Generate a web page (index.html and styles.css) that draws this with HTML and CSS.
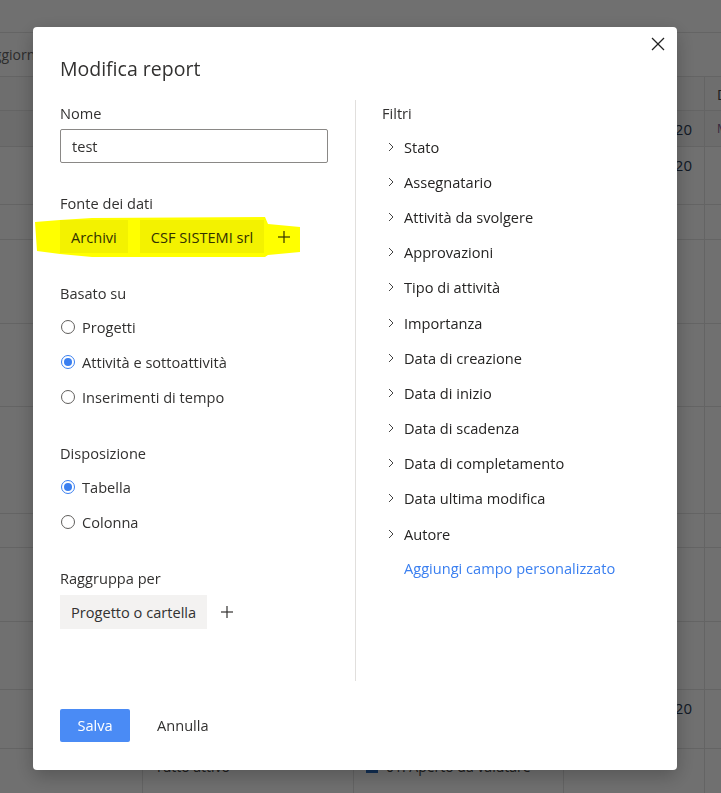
FILE: index.html
```html
<!DOCTYPE html>
<html lang="it">
<head>
  <meta charset="UTF-8">
  <meta name="viewport" content="width=device-width, initial-scale=1">
  <title>Modifica report</title>
  <link rel="stylesheet" href="styles.css">
</head>
<body>

  <div class="page">
    <div class="topbar"></div>
    <div class="toolbar"><span class="tool-btn">Aggiorna</span></div>

    <div class="grid">
      <div class="row head h33"><div></div><div></div><div></div><div></div><div>Data</div></div>
      <div class="row h35"><div></div><div></div><div></div><div class="date">12/05/2020</div><div class="user">M</div></div>
      <div class="row h57"><div></div><div></div><div></div><div class="date">14/05/2020</div><div></div></div>
      <div class="row h34"><div></div><div></div><div></div><div></div><div></div></div>
      <div class="row h83"><div></div><div></div><div></div><div></div><div></div></div>
      <div class="row h82"><div></div><div></div><div></div><div></div><div></div></div>
      <div class="row h106"><div></div><div></div><div></div><div></div><div></div></div>
      <div class="row h33"><div></div><div></div><div></div><div></div><div></div></div>
      <div class="row h73"><div></div><div></div><div></div><div></div><div></div></div>
      <div class="row h67"><div></div><div></div><div></div><div></div><div></div></div>
      <div class="row h58"><div></div><div></div><div></div><div class="date">18/05/2020</div><div></div></div>
      <div class="row h58"><div></div><div>Tutto attivo</div><div><span class="state-dot"></span>01. Aperto da valutare</div><div></div><div></div></div>
    </div>
  </div>

  <div class="overlay">
    <div class="modal">
      <button class="close-btn" aria-label="Chiudi">
        <svg width="14" height="14" viewBox="0 0 14 14" fill="none" stroke="currentColor" stroke-width="1.3">
          <path d="M1 1 13 13" />
          <path d="M13 1 1 13" />
        </svg>
      </button>

      <h2 class="modal-title">Modifica report</h2>

      <div class="modal-body">
        <div class="col-left">
          <div class="field">
            <div class="field-label">Nome</div>
            <input class="text-input" type="text" value="test">
          </div>

          <div class="field">
            <div class="field-label">Fonte dei dati</div>
            <div class="chips marked">
              <span class="chip">Archivi</span>
              <span class="chip">CSF SISTEMI srl</span>
              <span class="add-btn">
                <svg width="12" height="12" viewBox="0 0 12 12" fill="none" stroke="currentColor" stroke-width="1.2">
                  <path d="M6 0v12" />
                  <path d="M0 6h12" />
                </svg>
              </span>
              <!-- highlighter stroke from the screenshot -->
              <svg class="marker" width="275" height="45" viewBox="0 0 275 45">
                <polygon points="5,6 30,4 62,2 235,1 238,8 270,11 270,36 238,39 235,41 62,41 30,38 7,35" />
              </svg>
            </div>
          </div>

          <div class="field">
            <div class="field-label">Basato su</div>
            <div class="radio-group">
              <label class="radio"><span class="radio-mark"></span>Progetti</label>
              <label class="radio"><span class="radio-mark checked"></span>Attività e sottoattività</label>
              <label class="radio"><span class="radio-mark"></span>Inserimenti di tempo</label>
            </div>
          </div>

          <div class="field">
            <div class="field-label">Disposizione</div>
            <div class="radio-group">
              <label class="radio"><span class="radio-mark checked"></span>Tabella</label>
              <label class="radio"><span class="radio-mark"></span>Colonna</label>
            </div>
          </div>

          <div class="field">
            <div class="field-label">Raggruppa per</div>
            <div class="chips">
              <span class="chip tall">Progetto o cartella</span>
              <span class="add-btn">
                <svg width="12" height="12" viewBox="0 0 12 12" fill="none" stroke="currentColor" stroke-width="1.2">
                  <path d="M6 0v12" />
                  <path d="M0 6h12" />
                </svg>
              </span>
            </div>
          </div>
        </div>

        <div class="col-right">
          <div class="field-label">Filtri</div>
          <div class="filter-list" id="filters"></div>
          <a class="add-field" href="#">Aggiungi campo personalizzato</a>
        </div>
      </div>

      <div class="modal-footer">
        <button class="btn-primary">Salva</button>
        <button class="btn-link">Annulla</button>
      </div>
    </div>
  </div>

  <script>
    const filters = [
  "Stato",
  "Assegnatario",
  "Attività da svolgere",
  "Approvazioni",
  "Tipo di attività",
  "Importanza",
  "Data di creazione",
  "Data di inizio",
  "Data di scadenza",
  "Data di completamento",
  "Data ultima modifica",
  "Autore"
];

const list = document.getElementById("filters");

filters.forEach(name => {
  const item = document.createElement("div");
  item.className = "filter-item";
  item.innerHTML =
    '<svg width="10" height="10" viewBox="0 0 10 10" fill="none" stroke="currentColor" stroke-width="1">' +
    '<path d="M3 1 7 5 3 9" /></svg><span></span>';
  item.querySelector("span").textContent = name;
  list.appendChild(item);
});
  </script>
</body>
</html>
```

FILE: styles.css
```css
body {
  margin: 0;
  padding: 0;
  font-family: "Open Sans", "Noto Sans", sans-serif;
  overflow: hidden;
}

/* page behind the dialog */
.page {
  width: 900px;
  height: 793px;
  background: #fff;
  color: #444;
  font-size: 14px;
}

.topbar {
  height: 32px;
  border-bottom: 1px solid #e4e4e4;
}

.toolbar {
  height: 43px;
  display: flex;
  align-items: center;
  border-bottom: 1px solid #e4e4e4;
}

.tool-btn {
  margin-left: -15px;
  font-size: 14px;
  color: #666;
}

.row {
  display: grid;
  grid-template-columns: 142px 211px 210px 141px 196px;
  border-bottom: 1px solid #e4e4e4;
}

.row > div {
  padding: 8px 12px 0;
  line-height: 20px;
  white-space: nowrap;
  overflow: hidden;
}

.row > div:nth-child(n+2) {
  border-left: 1px solid transparent;
}

.row > div:nth-child(5),
.row:last-child > div {
  border-left-color: #e4e4e4;
}

.row.head { background: #fafafa; }

.h33 { height: 33px; }
.h34 { height: 34px; }
.h35 { height: 35px; background: #f6f6f6; }
.h57 { height: 57px; }
.h58 { height: 58px; }
.h67 { height: 67px; }
.h73 { height: 73px; }
.h82 { height: 82px; }
.h83 { height: 83px; }
.h106 { height: 106px; }

.date {
  text-align: right;
  color: #2a3c55;
  font-size: 15px;
}

.user {
  color: #7a5a8c;
  font-size: 12px;
}

.state-dot {
  display: inline-block;
  width: 12px;
  height: 12px;
  margin-right: 8px;
  background: #2a6cc0;
  vertical-align: -1px;
}

/* dialog */
.overlay {
  position: fixed;
  inset: 0;
  background: rgba(0, 0, 0, 0.56);
  padding: 27px 0 0 33px;
  box-sizing: border-box;
}

.modal {
  position: relative;
  width: 644px;
  height: 743px;
  box-sizing: border-box;
  padding: 28px 27px;
  background: #fff;
  border-radius: 4px;
  box-shadow: 0 6px 20px rgba(0, 0, 0, 0.25);
  color: #323130;
  display: flex;
  flex-direction: column;
}

.close-btn {
  position: absolute;
  top: 10px;
  right: 12px;
  width: 14px;
  height: 14px;
  padding: 0;
  border: none;
  background: none;
  color: #222;
  cursor: pointer;
}

.close-btn svg { display: block; }

.modal-title {
  margin: 0;
  font-size: 19.5px;
  font-weight: 400;
  line-height: 28px;
  color: #323130;
}

.modal-body {
  display: flex;
  height: 581px;
  margin-top: 17px;
}

.col-left {
  width: 268px;
  display: flex;
  flex-direction: column;
}

.col-right {
  flex: 1;
  margin-left: 27px;
  padding-left: 26px;
  border-left: 1px solid #e1dfdd;
}

.field + .field {
  margin-top: 27px;
}

.field-label {
  font-size: 14.6px;
  line-height: 26px;
  color: #323130;
}

.text-input {
  display: block;
  width: 100%;
  height: 34px;
  margin-top: 3px;
  box-sizing: border-box;
  padding: 0 11px;
  border: 1px solid #8a8886;
  border-radius: 2px;
  font-family: inherit;
  font-size: 14.6px;
  color: #323130;
  outline: none;
}

.chips {
  position: relative;
  display: flex;
  align-items: center;
  gap: 12px;
  margin-top: 4px;
}

.chip {
  height: 33px;
  padding: 0 11px;
  display: flex;
  align-items: center;
  background: #f3f2f1;
  font-size: 14.6px;
  color: #323130;
}

.chip.tall { height: 34px; }

.add-btn {
  display: flex;
  margin-left: 2px;
  color: #323130;
}

.marker {
  position: absolute;
  left: -30px;
  top: -4px;
  mix-blend-mode: multiply;
  pointer-events: none;
}

.marker polygon { fill: #ffff00; }

.radio-group {
  margin-top: 3px;
  margin-bottom: -1px;
}

.radio {
  display: flex;
  align-items: center;
  gap: 7px;
  height: 35px;
  font-size: 14.6px;
  color: #323130;
}

.radio-mark {
  width: 14px;
  height: 14px;
  margin-left: 1px;
  box-sizing: border-box;
  border: 1px solid #605e5c;
  border-radius: 50%;
  display: flex;
  align-items: center;
  justify-content: center;
}

.radio-mark.checked {
  border-color: #3a7ff0;
}

.radio-mark.checked::after {
  content: "";
  width: 8px;
  height: 8px;
  border-radius: 50%;
  background: #3a7ff0;
}

.filter-list {
  margin-top: 3px;
}

.filter-item {
  height: 35.2px;
  display: flex;
  align-items: center;
  gap: 8px;
  padding-left: 4px;
  font-size: 14.6px;
  color: #252423;
}

.filter-item svg {
  color: #444;
  flex: none;
}

.add-field {
  display: block;
  height: 35.2px;
  line-height: 35.2px;
  padding-left: 22px;
  font-size: 14.6px;
  color: #3a7ff0;
  text-decoration: none;
}

.modal-footer {
  display: flex;
  align-items: center;
  margin-top: 28px;
}

.btn-primary {
  width: 70px;
  height: 33px;
  padding: 0 0 2px;
  border: none;
  border-radius: 2px;
  background: #4a8bf5;
  color: #fff;
  font-family: inherit;
  font-size: 14.6px;
  cursor: pointer;
}

.btn-link {
  margin-left: 27px;
  padding: 0 0 2px;
  border: none;
  background: none;
  font-family: inherit;
  font-size: 14.6px;
  color: #323130;
  cursor: pointer;
}
```
